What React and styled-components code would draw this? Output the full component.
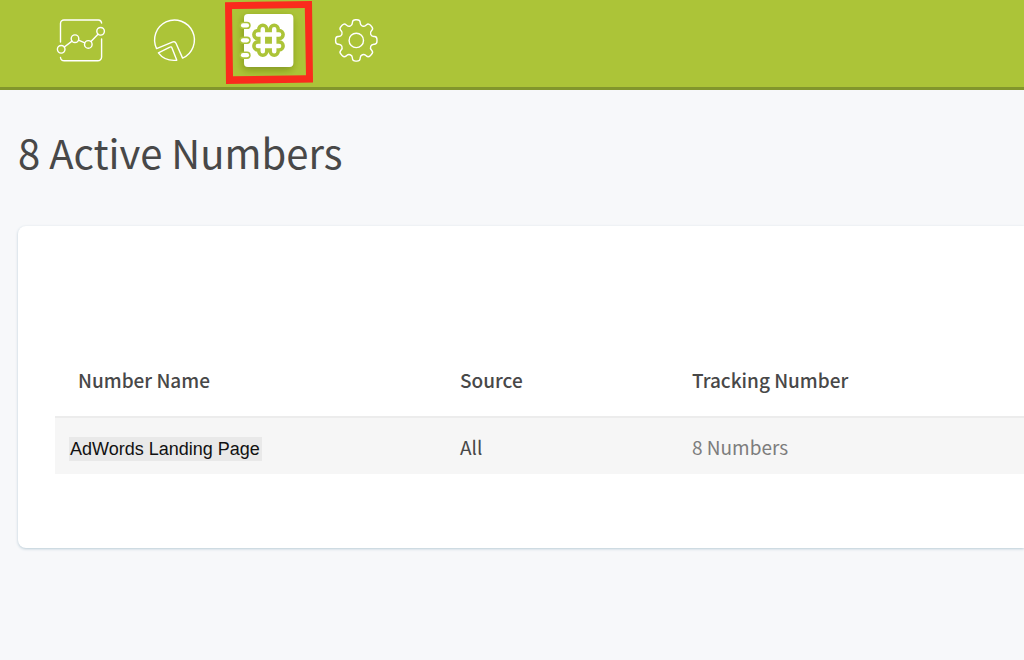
import React from "react";
import styled, { createGlobalStyle } from "styled-components";

const GlobalStyle = createGlobalStyle`
  *, *::before, *::after { box-sizing: border-box; }
  body {
    margin: 0;
    background: #f7f8fa;
    color: #484848;
    font-family: "Noto Sans CJK SC", "Noto Sans", sans-serif;
  }
`;

const Header = styled.header`
  height: 90px;
  background: #acc438;
  border-bottom: 3px solid #82962c;
`;

const Nav = styled.nav`
  display: flex;
  gap: 6px;
  padding-left: 37px;
`;

const NavLink = styled.a`
  display: flex;
  justify-content: center;
  width: ${(p) => (p.$compact ? 76 : 88)}px;

  svg { display: block; }
`;

const Main = styled.main`
  padding: 32px 0 48px 18px;
`;

const Title = styled.h1`
  margin: 0 0 44px;
  font-size: 40px;
  line-height: 60px;
  font-weight: 400;
`;

const Card = styled.section`
  padding: 119px 0 74px 37px;
  background: #fff;
  border-radius: 8px 0 0 8px;
  box-shadow: 0 1px 3px #b9cbd6;
`;

const Table = styled.table`
  width: 100%;
  table-layout: fixed;
  border-collapse: separate;
  border-spacing: 0;
  font-size: 19px;
  line-height: 24px;
  text-align: left;
`;

const HeadCell = styled.th`
  width: ${(p) => p.$width || "auto"};
  height: 71px;
  padding: 0 0 2px 23px;
  font-weight: 500;
`;

const Cell = styled.td`
  height: 58px;
  padding: ${(p) => (p.$flush ? "6px 0 0 14px" : "2px 0 0 23px")};
  background: #f6f6f6;
  border-top: 2px solid #ececec;
  color: ${(p) => (p.$muted ? "#7d7d7d" : "#484848")};
`;

const NumberName = styled.span`
  display: block;
  width: fit-content;
  padding: 0 2px 0 1px;
  background: #e9e9e9;
  color: #111;
  font-family: "Liberation Sans", Arial, sans-serif;
  font-size: 18px;
`;

function ChartIcon() {
  return (
    <svg width="88" height="87" viewBox="37 0 88 87" fill="none" stroke="#fff" strokeWidth="1.4" strokeLinecap="round" aria-hidden="true">
      <path d="M60.5 42V23.5a3.5 3.5 0 0 1 3.5-3.5h34.5a3.5 3.5 0 0 1 3.1 3" />
      <path d="M101.6 39v18a3.8 3.8 0 0 1-3.8 3.8H64.3a3.8 3.8 0 0 1-3.8-3.3" />
      <path d="M64.3 47l7.7-5.9M78.5 40.2l6.3 2.7M91 41.5l7-7.3" />
      <circle cx="61.2" cy="49.3" r="3.8" />
      <circle cx="75" cy="38.7" r="3.8" />
      <circle cx="88.3" cy="44.4" r="3.8" />
      <circle cx="100.6" cy="31.3" r="3.8" />
    </svg>
  );
}

function PieIcon() {
  return (
    <svg width="88" height="87" viewBox="131 0 88 87" fill="none" stroke="#fff" strokeWidth="1.4" strokeLinejoin="round" aria-hidden="true">
      <path d="M156.6 48.6A19.9 19.9 0 1 1 182.6 58.1L176 43.2Q175 41.1 172.9 41.9Z" />
      <path d="M158.4 52.8L169.9 47.1Q171.4 46.3 172 47.9L176.8 60.2Q164.8 61.4 158.4 52.8Z" />
    </svg>
  );
}

function NumbersIcon() {
  const hash = "M262.8 29.3V51.2M274.2 29.3V51.2M257.9 34.6H279.1M257.9 45.9H279.1";
  return (
    <svg width="88" height="87" viewBox="225 0 88 87" fill="none" strokeLinecap="round" aria-hidden="true">
      <defs>
        <filter id="pageShadow" x="-30%" y="-30%" width="160%" height="160%">
          <feDropShadow dx="-1" dy="3" stdDeviation="4" floodColor="#677c12" floodOpacity="0.65" />
        </filter>
      </defs>
      <rect x="244" y="14" width="49.3" height="53" rx="4" fill="#fff" filter="url(#pageShadow)" />
      {[25.4, 40.3, 55.2].map((y) => (
        <g key={y}>
          <path d={`M243 ${y}h4`} stroke="#acc438" strokeWidth="7.4" />
          <path d={`M243 ${y}h4`} stroke="#fff" strokeWidth="4.2" />
        </g>
      ))}
      <path d={hash} stroke="#acc438" strokeWidth="11.6" />
      <path d={hash} stroke="#fff" strokeWidth="4.5" />
      <path
        d="M225 2.2L312 1L313 82.6L226 84ZM232 9L233 76.3L306 75.2L304.8 8Z"
        fill="#fa2b1d"
        fillRule="evenodd"
      />
    </svg>
  );
}

const GEAR_CENTER = { x: 356.3, y: 40.4 };

function gearPath() {
  const points = [];
  for (let tooth = 0; tooth < 8; tooth += 1) {
    [[15.8, -15], [21, -10], [21, 10], [15.8, 15]].forEach(([radius, offset]) => {
      const angle = ((tooth * 45 + offset) * Math.PI) / 180;
      points.push([
        GEAR_CENTER.x + radius * Math.cos(angle),
        GEAR_CENTER.y + radius * Math.sin(angle),
      ]);
    });
  }
  const toward = (a, b) => a.map((v, i) => (v + (b[i] - v) * 0.42).toFixed(2)).join(" ");
  const steps = points.map((p, i) => {
    const before = points[(i + points.length - 1) % points.length];
    const after = points[(i + 1) % points.length];
    return `${i ? "L" : "M"}${toward(p, before)}Q${p.map((v) => v.toFixed(2)).join(" ")} ${toward(p, after)}`;
  });
  return `${steps.join("")}Z`;
}

function GearIcon() {
  return (
    <svg width="76" height="87" viewBox="319 0 76 87" fill="none" stroke="#fff" strokeWidth="1.4" aria-hidden="true">
      <path d={gearPath()} />
      <circle cx={GEAR_CENTER.x} cy={GEAR_CENTER.y} r="7.2" />
    </svg>
  );
}

export default function App() {
  return (
    <>
      <GlobalStyle />
      <Header>
        <Nav>
          <NavLink href="#activity" aria-label="Activity"><ChartIcon /></NavLink>
          <NavLink href="#reports" aria-label="Reports"><PieIcon /></NavLink>
          <NavLink href="#numbers" aria-label="Numbers" aria-current="page"><NumbersIcon /></NavLink>
          <NavLink href="#settings" aria-label="Settings" $compact><GearIcon /></NavLink>
        </Nav>
      </Header>
      <Main>
        <Title>8 Active Numbers</Title>
        <Card>
          <Table>
            <thead>
              <tr>
                <HeadCell scope="col" $width="382px">Number Name</HeadCell>
                <HeadCell scope="col" $width="232px">Source</HeadCell>
                <HeadCell scope="col">Tracking Number</HeadCell>
              </tr>
            </thead>
            <tbody>
              <tr>
                <Cell $flush><NumberName>AdWords Landing Page</NumberName></Cell>
                <Cell>All</Cell>
                <Cell $muted>8 Numbers</Cell>
              </tr>
            </tbody>
          </Table>
        </Card>
      </Main>
    </>
  );
}
